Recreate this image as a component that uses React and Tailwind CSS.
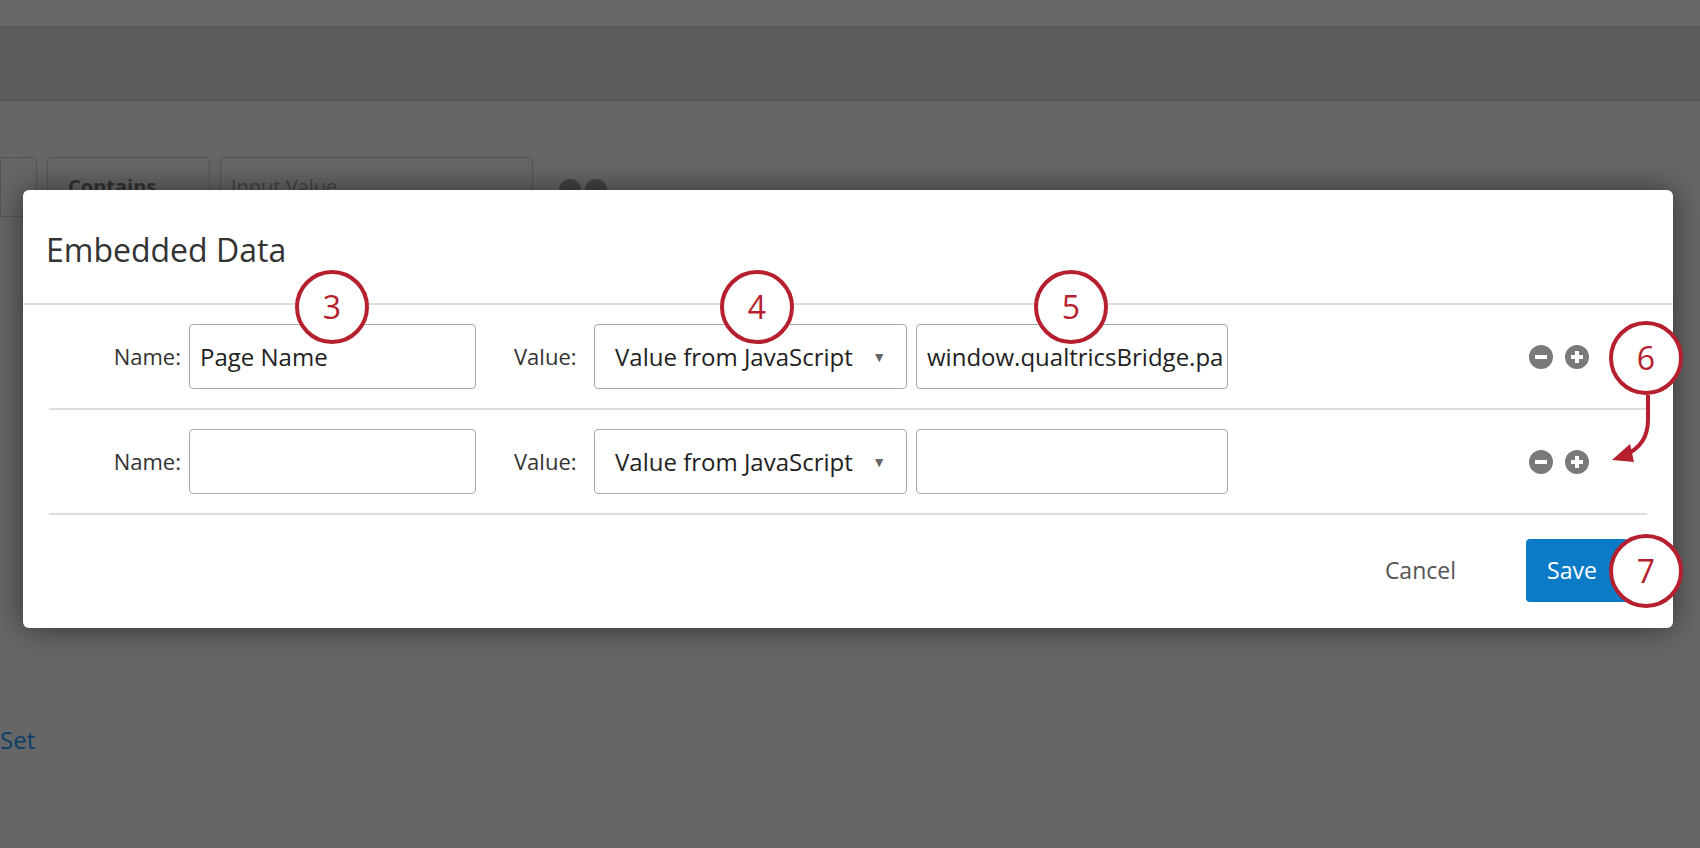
export default function App() {
  const font = { fontFamily: '"Open Sans", "Liberation Sans", Arial, sans-serif' };
  const Circle = ({ n, x, y }) => (
    <div className="absolute w-[74px] h-[74px] rounded-full border-[4px] border-[#b51f2e] bg-white flex items-center justify-center text-[#b51f2e] text-[32px]" style={{ left: x - 37, top: y - 37 }}>{n}</div>
  );
  const Icons = () => (
    <div className="flex gap-[12px] mr-[58px]">
      <div className="w-[24px] h-[24px] rounded-full bg-[#7a7a7a] flex items-center justify-center"><div className="w-[12px] h-[4px] bg-white" /></div>
      <div className="w-[24px] h-[24px] rounded-full bg-[#7a7a7a] relative flex items-center justify-center"><div className="w-[12px] h-[4px] bg-white" /><div className="absolute w-[4px] h-[12px] bg-white" /></div>
    </div>
  );
  const Row = ({ name, val, border }) => (
    <div className={`flex items-center h-[105px] mx-[26px] ${border ? 'border-b-2 border-[#ddd]' : ''}`}>
      <span className="w-[140px] text-right text-[#333] text-[22px] pr-[8px]">Name:</span>
      <div className="w-[287px] h-[65px] border border-[#aaa] rounded-[4px] flex items-center px-[10px] text-[24px] text-[#222]">{name}</div>
      <span className="ml-[38px] text-[#333] text-[22px] w-[80px]">Value:</span>
      <div className="w-[313px] h-[65px] border border-[#aaa] rounded-[4px] flex items-center justify-between px-[20px] text-[24px] text-[#222]">Value from JavaScript<span className="text-[#666] text-[14px]">▼</span></div>
      <div className="ml-[9px] w-[312px] h-[65px] border border-[#aaa] rounded-[4px] flex items-center px-[10px] text-[24px] text-[#222] overflow-hidden whitespace-nowrap">{val}</div>
      <div className="flex-1" />
      <Icons />
    </div>
  );
  return (
    <div className="w-[1700px] h-[848px] bg-[#666] relative overflow-hidden" style={font}>
      <div className="h-[26px] bg-[#676767]" />
      <div className="h-[75px] bg-[#5b5c5d] border-y border-[#555]" />
      <div className="flex gap-[10px] mt-[56px] items-start">
        <div className="w-[37px] h-[60px] border border-[#555] rounded-r-[4px]" />
        <div className="w-[163px] h-[60px] border border-[#555] rounded-[4px] px-[20px] pt-[14px] text-[#333] font-bold text-[20px]">Contains</div>
        <div className="w-[313px] h-[60px] border border-[#555] rounded-[4px] px-[10px] pt-[14px] text-[#444] text-[20px]">Input Value</div>
        <div className="flex gap-[4px] mt-[22px] ml-[16px]"><div className="w-[22px] h-[22px] rounded-full bg-[#444]" /><div className="w-[22px] h-[22px] rounded-full bg-[#444]" /></div>
      </div>
      <div className="absolute left-0 top-[722px] text-[#0d3e6a] text-[24px]">Set</div>
      <div className="absolute left-[23px] top-[190px] w-[1650px] h-[438px] bg-white rounded-[6px] shadow-[0_0_30px_rgba(0,0,0,0.5)]">
        <div className="h-[115px] border-b-2 border-[#ddd] px-[23px] pt-[36px] text-[32px] text-[#333]">Embedded Data</div>
        <Row name="Page Name" val="window.qualtricsBridge.pa" border />
        <Row name="" val="" border />
        <div className="flex items-center justify-end h-[111px] pr-[45px]">
          <span className="text-[#555] text-[23px] mr-[70px]">Cancel</span>
          <div className="w-[102px] h-[63px] bg-[#0b7bc8] rounded-[4px] text-white text-[23px] flex items-center justify-center pr-[10px]">Save</div>
        </div>
      </div>
      <Circle n="3" x={332} y={307} />
      <Circle n="4" x={757} y={307} />
      <Circle n="5" x={1071} y={307} />
      <Circle n="6" x={1646} y={358} />
      <Circle n="7" x={1646} y={571} />
      <svg className="absolute left-0 top-0" width="1700" height="848">
        <path d="M1648 395 L1648 420 Q1648 445 1625 455" stroke="#b51f2e" strokeWidth="4" fill="none" />
        <path d="M1612 460 L1630 444 L1634 462 Z" fill="#b51f2e" />
      </svg>
    </div>
  );
}
